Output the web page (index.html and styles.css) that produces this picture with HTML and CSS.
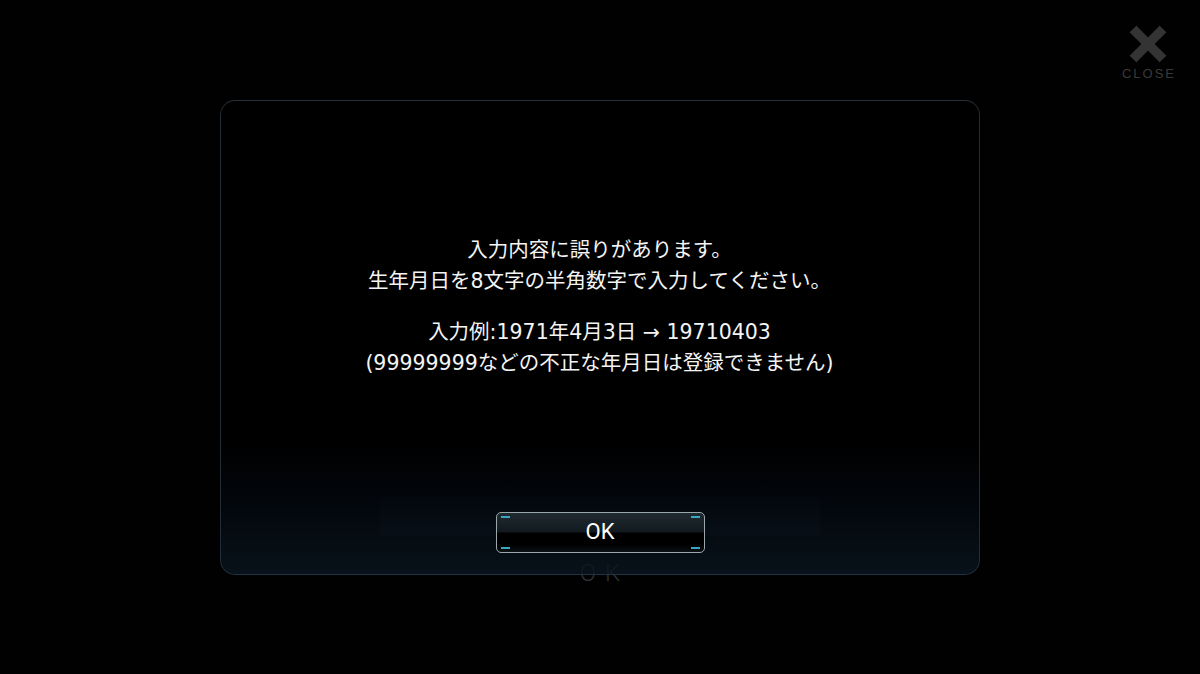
FILE: index.html
```html
<!DOCTYPE html>
<html lang="ja">
<head>
<meta charset="utf-8">
<title>入力エラー</title>
<link rel="stylesheet" href="styles.css">
</head>
<body>
<div class="stage">
  <div class="ghost-rect"></div>
  <div class="ghost-ok">OK</div>

  <button class="close" type="button" aria-label="CLOSE">
    <svg class="close-x" width="40" height="40" viewBox="0 0 40 40" aria-hidden="true">
      <line x1="5" y1="5" x2="35" y2="35" />
      <line x1="35" y1="5" x2="5" y2="35" />
    </svg>
    <span class="close-label">CLOSE</span>
  </button>

  <div class="dialog" role="alertdialog">
    <div class="message">
      <p>入力内容に誤りがあります。<br>生年月日を8文字の半角数字で入力してください。</p>
      <p>入力例:1971年4月3日 → 19710403<br>(99999999などの不正な年月日は登録できません)</p>
    </div>
    <button class="ok" type="button">OK</button>
  </div>
</div>
</body>
</html>
```

FILE: styles.css
```css
html, body {
  margin: 0;
  padding: 0;
  background: #000;
}

.stage {
  position: relative;
  width: 1200px;
  height: 674px;
  display: flex;
  align-items: center;
  justify-content: center;
  background: #010101;
  overflow: hidden;
  font-family: "DejaVu Sans", "Noto Sans CJK JP", sans-serif;
}

/* faint elements of the screen behind the modal */
.ghost-rect {
  position: absolute;
  left: 380px;
  top: 497px;
  width: 440px;
  height: 39px;
  background: #0c1218;
}

.ghost-ok {
  position: absolute;
  left: 0;
  right: 0;
  top: 559px;
  text-align: center;
  font-family: Roboto, "Liberation Sans", sans-serif;
  font-size: 24px;
  font-weight: 300;
  letter-spacing: 9px;
  text-indent: 9px;
  color: #303236;
}

/* close control */
.close {
  position: absolute;
  top: 24px;
  right: 24px;
  width: 56px;
  padding: 0;
  border: 0;
  background: none;
  display: flex;
  flex-direction: column;
  align-items: center;
  gap: 3px;
  cursor: pointer;
}

.close-x {
  display: block;
}

.close-x line {
  stroke: #343434;
  stroke-width: 9.5;
  stroke-linecap: butt;
}

.close-label {
  font-family: "Liberation Sans", Arial, sans-serif;
  font-size: 13px;
  letter-spacing: 2px;
  text-indent: 2px;
  color: #3a3a3a;
  line-height: 13px;
}

/* dialog */
.dialog {
  position: relative;
  box-sizing: border-box;
  width: 760px;
  height: 475px;
  margin-left: -1px;
  border-radius: 15px;
  border: 1.5px solid #283035;
  border-bottom-color: #1f3242;
  border-left-color: #232d35;
  border-right-color: #232d35;
  background: linear-gradient(to bottom,
    rgba(0, 0, 0, 0.94) 0%,
    rgba(0, 0, 0, 0.94) 72%,
    rgba(3, 8, 14, 0.86) 86%,
    rgba(10, 22, 32, 0.8) 100%);
  display: flex;
  flex-direction: column;
  align-items: center;
  padding: 134px 0 21px;
}

.message {
  color: #f4f4f4;
  font-size: 20.5px;
  line-height: 31px;
  text-align: center;
}

.message p {
  margin: 0;
}

.message p + p {
  margin-top: 20px;
}

.ok {
  margin-top: auto;
  box-sizing: border-box;
  width: 209px;
  height: 41px;
  margin-left: 1px;
  border-radius: 5px;
  border: 1.5px solid #9aa7ad;
  color: #fff;
  font-family: Roboto, "Liberation Sans", sans-serif;
  font-size: 22px;
  font-weight: 400;
  line-height: 38px;
  padding: 0;
  cursor: pointer;
  background:
    linear-gradient(#3aa6c0, #3aa6c0) left 4px top 3px / 9px 2px no-repeat,
    linear-gradient(#3aa6c0, #3aa6c0) right 4px top 3px / 9px 2px no-repeat,
    linear-gradient(#3aa6c0, #3aa6c0) left 4px bottom 3px / 9px 2px no-repeat,
    linear-gradient(#3aa6c0, #3aa6c0) right 4px bottom 3px / 9px 2px no-repeat,
    linear-gradient(to bottom,
      #1f2a30 0%,
      #121a1f 48%,
      #000 52%,
      #000 82%,
      #0a1216 100%);
}
```
